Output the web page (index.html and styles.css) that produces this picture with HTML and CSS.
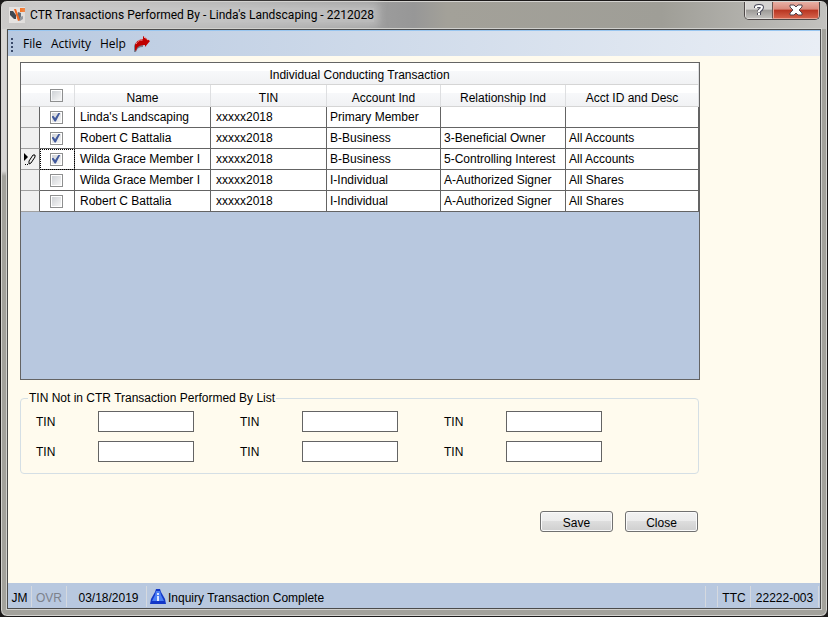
FILE: index.html
```html
<!DOCTYPE html>
<html lang="en">
<head>
<meta charset="utf-8">
<title>CTR Transactions Performed By</title>
<link rel="stylesheet" href="styles.css">
</head>
<body>
<div class="window">
  <header class="titlebar">
    <svg class="app-icon" width="16" height="16" viewBox="0 0 16 16" aria-hidden="true">
      <rect width="16" height="16" fill="#e6e3e1"/>
      <path d="M1 4h3l3 4v4H5L1 8z" fill="#3f4852"/>
      <path d="M9 5l3 1v6l-2 2-2-4z" fill="#5c646e"/>
      <path d="M11 10l3-1v3l-3 2z" fill="#8b9098"/>
      <path d="M5 2h2l4 11-2 1z" fill="#f0641e"/>
      <rect x="11" y="1" width="5" height="4" fill="#f9701c"/>
    </svg>
    <h1 class="title"><span class="title-text">CTR Transactions Performed By - Linda's Landscaping - 2212028</span></h1>
    <div class="caption-buttons">
      <button class="caption help" type="button" aria-label="Help">
        <svg width="12" height="14" viewBox="0 0 12 14"><path d="M3 5V4q0-1 3-1t3 1q0 2-2 3l-1 2M6 10v2" fill="none" stroke="#4a4a5a" stroke-width="4"/><path d="M3 5V4q0-1 3-1t3 1q0 2-2 3l-1 1v1M6 10v2" fill="none" stroke="#fff" stroke-width="2"/></svg>
      </button>
      <button class="caption close" type="button" aria-label="Close window">
        <svg width="14" height="12" viewBox="0 0 14 12"><path d="M1 1h4l2 2 2-2h4v2l-3 3 3 3v2H9L7 9l-2 2H1V9l3-3-3-3z" fill="#fff" stroke="#54444c"/></svg>
      </button>
    </div>
  </header>
  <div class="client">
    <nav class="menubar">
      <span class="grip"></span>
      <button class="menu" type="button">File</button>
      <button class="menu" type="button">Activity</button>
      <button class="menu" type="button">Help</button>
      <button class="menu-arrow" type="button" aria-label="Go">
        <svg width="17" height="16" viewBox="0 0 17 16"><path d="M0 16V10q1-5 9-5v6q-6 0-7 5z" fill="#77808e"/><path d="M1 14V9q1-5 8-6V0l7 5-5 6V9q-6 0-8 3l-1 3z" fill="#c00000"/><path d="M2 8q2-4 7-4M10 1l4 3" fill="none" stroke="#f3b6b6" stroke-dasharray="2 1"/></svg>
      </button>
    </nav>
    <main class="content">
      <div class="grid">
        <table>
          <colgroup><col class="c-row"><col class="c-check"><col class="c-name"><col class="c-tin"><col class="c-acct"><col class="c-rel"><col class="c-desc"></colgroup>
          <thead>
            <tr class="band"><th colspan="7">Individual Conducting Transaction</th></tr>
            <tr class="heads"><th></th><th class="tick"><input type="checkbox" aria-label="Select all"></th><th>Name</th><th>TIN</th><th>Account Ind</th><th>Relationship Ind</th><th>Acct ID and Desc</th></tr>
          </thead>
          <tbody>
            <tr><td class="selector"></td><td class="tick"><input type="checkbox" aria-label="Row 1" checked></td><td class="name">Linda's Landscaping</td><td class="tin">xxxxx2018</td><td>Primary Member</td><td></td><td></td></tr>
            <tr><td class="selector"></td><td class="tick"><input type="checkbox" aria-label="Row 2" checked></td><td class="name">Robert C Battalia</td><td class="tin">xxxxx2018</td><td>B-Business</td><td>3-Beneficial Owner</td><td>All Accounts</td></tr>
            <tr><td class="selector"><svg width="13" height="13" viewBox="0 0 13 13"><path d="M1 0l4 4-4 4z"/><path d="M2 11h1v1H2zM4 11h1v1H4z"/><path d="M6 11V8l4-6h2v2l-4 6z" fill="none" stroke="#000"/></svg></td><td class="tick current"><input type="checkbox" aria-label="Row 3" checked></td><td class="name">Wilda Grace Member I</td><td class="tin">xxxxx2018</td><td>B-Business</td><td>5-Controlling Interest</td><td>All Accounts</td></tr>
            <tr><td class="selector"></td><td class="tick"><input type="checkbox" aria-label="Row 4"></td><td class="name">Wilda Grace Member I</td><td class="tin">xxxxx2018</td><td>I-Individual</td><td>A-Authorized Signer</td><td>All Shares</td></tr>
            <tr><td class="selector"></td><td class="tick"><input type="checkbox" aria-label="Row 5"></td><td class="name">Robert C Battalia</td><td class="tin">xxxxx2018</td><td>I-Individual</td><td>A-Authorized Signer</td><td>All Shares</td></tr>
          </tbody>
        </table>
      </div>
      <fieldset class="tins">
        <legend>TIN Not in CTR Transaction Performed By List</legend>
        <div class="tin-grid">
          <label for="t1">TIN</label><input id="t1" type="text">
          <label for="t2">TIN</label><input id="t2" type="text">
          <label for="t3">TIN</label><input id="t3" type="text">
          <label for="t4">TIN</label><input id="t4" type="text">
          <label for="t5">TIN</label><input id="t5" type="text">
          <label for="t6">TIN</label><input id="t6" type="text">
        </div>
      </fieldset>
      <div class="actions">
        <button class="btn" type="button">Save</button>
        <button class="btn" type="button">Close</button>
      </div>
    </main>
    <footer class="status">
      <span class="cell user">JM</span>
      <span class="cell mode">OVR</span>
      <span class="cell date">03/18/2019</span>
      <span class="cell message"><svg width="16" height="16" viewBox="0 0 16 16"><path d="M6 0h4l1 3 4 7 1 5H0l1-5 4-7z" fill="#1237c8"/><path d="M6 2h4l1 4 3 6H2l3-6z" fill="#4d80f4"/><path d="M7 4h2v2H7zM7 7h2v5H7z" fill="#dbe6ff"/></svg>Inquiry Transaction Complete</span>
      <span class="cell spare"></span>
      <span class="cell site">TTC</span>
      <span class="cell number">22222-003</span>
    </footer>
  </div>
</div>
</body>
</html>
```
FILE: styles.css
```css
* { box-sizing: border-box; }

body {
  margin: 0;
  background: #1c1a1a;
  color: #000;
  font: 12px/16px "Liberation Sans", Arial, sans-serif;
}

button, input { font: inherit; color: inherit; }

.window {
  display: flex;
  flex-direction: column;
  min-height: 100vh;
  padding: 0 6px 7px;
  border: 1px solid #1c1a1a;
  border-radius: 7px;
  background: linear-gradient(#d8d6d4 0, #d8d6d4 170px, #a3a29c 175px) left / 7px 100% no-repeat, #a3a29c;
  box-shadow: inset 0 0 0 1px #d4d3d0;
}

.titlebar {
  display: flex;
  align-items: flex-start;
  height: 27px;
  margin: 1px -5px 0;
  padding-left: 6px;
  border-radius: 5px 5px 0 0;
  background: linear-gradient(90deg, #cccac9 0, #b0b0b0 30%, #979797 50%, #a3a199 54%, #9f9e97 80%, #c3c2bf);
}

.app-icon { margin: 5px 5px 0 1px; }

.title {
  flex: 1;
  margin: 5px 0 0;
  font: 12px/16px Roboto, "Segoe UI", sans-serif;
}

.title-text {
  background: rgba(205, 205, 205, 0.6);
  box-shadow: 0 0 8px 5px rgba(205, 205, 205, 0.6);
}

.caption-buttons {
  display: flex;
  margin: 0 6px 0 0;
  border: 1px solid #4e4848;
  border-top: 0;
  border-radius: 0 0 5px 5px;
  overflow: hidden;
}

.caption {
  display: flex;
  align-items: center;
  justify-content: center;
  height: 17px;
  padding: 0;
  border: 1px solid #e2dfdc;
  border-top: 0;
}

.help { width: 28px; background: linear-gradient(#d4d2d0 0 45%, #9c9a97 50%, #c0bfbc); border-right-color: #6a5550; }
.close { width: 46px; border-color: #e8a090; background: linear-gradient(#e8b0a4, #d98a7c 45%, #b83420 50%, #d4614a); }

.client {
  display: flex;
  flex: 1;
  flex-direction: column;
  border: 1px solid #4c4c4c;
  background: #fffbee;
  box-shadow: 0 0 0 1px #d0d0cd;
}

.menubar {
  display: flex;
  align-items: center;
  height: 26px;
  border-top: 1px solid #99c6f0;
  background: linear-gradient(90deg, #b8c9e0, #e9eef5);
  font: 12px/16px "Open Sans", "Segoe UI", sans-serif;
}

.grip {
  width: 2px;
  height: 14px;
  margin: 2px 5px 0 3px;
  background: repeating-linear-gradient(#3a4a6a 0 2px, transparent 2px 4px);
}

.menu { margin: 0; padding: 0 4px 0 5px; border: 0; background: none; }
.menu-arrow { display: flex; padding: 0 4px; border: 0; background: none; }

.content { flex: 1; padding: 6px 12px 0; }

.grid {
  width: 680px;
  max-width: 100%;
  min-height: 318px;
  border: 1px solid #646464;
  background: #b8c8df;
}

table { width: 100%; border-collapse: separate; border-spacing: 0; table-layout: fixed; }

.c-row { width: 19px; }
.c-check { width: 35px; }
.c-name { width: 136px; }
.c-tin { width: 116px; }
.c-acct { width: 114px; }
.c-rel { width: 125px; }

th, td { height: 21px; padding: 0 3px; overflow: hidden; white-space: nowrap; font-weight: normal; }
th { height: 22px; border-right: 1px solid #dedfe1; border-bottom: 1px solid #d5d5d5; background: linear-gradient(#fff 0 40%, #f7f8fa 40%, #f1f2f4); }
.band th { padding-top: 3px; }
.heads th { padding-top: 4px; }
.heads th:first-child { border-right-color: transparent; }
td { border-right: 1px solid #646464; border-bottom: 1px solid #646464; background: #fff; }
td.name { padding-left: 5px; }
td.tin { padding-left: 5px; }
td.selector { padding: 0 0 0 2px; background: #f0f0f0; border-bottom-color: #a0a0a0; }
.selector svg { display: block; }
td.tick, .heads th.tick { padding: 0 2px 0 0; text-align: center; }
td.current { outline: 1px dotted #000; outline-offset: -1px; }

input[type="checkbox"] {
  display: block;
  width: 13px;
  height: 13px;
  margin: 0 auto;
  border: 1px solid #8e8f8f;
  background: linear-gradient(135deg, #cfd2d6, #f6f6f6) content-box;
  background-color: #f4f4f4;
  padding: 1px;
  appearance: none;
}

input[type="checkbox"]:checked::before {
  content: "";
  display: block;
  width: 9px;
  height: 9px;
  background: #41599c;
  clip-path: polygon(0 45%, 20% 35%, 40% 60%, 80% 0, 100% 0, 48% 100%, 35% 100%);
}

.tins {
  width: 679px;
  max-width: 100%;
  margin: 10px 0 0;
  padding: 5px 15px 11px;
  border: 1px solid #d5dfe5;
  border-radius: 4px;
}

legend { margin-left: -8px; padding: 0 1px; }

.tin-grid {
  display: grid;
  grid-template-columns: repeat(3, 62px 142px);
  row-gap: 9px;
  align-items: center;
}

.tin-grid input { width: 96px; height: 21px; padding: 0 3px; border: 1px solid #646464; background: #fff; }

.actions { display: flex; justify-content: flex-end; gap: 12px; width: 678px; max-width: 100%; margin-top: 37px; }

.btn {
  width: 73px;
  height: 21px;
  padding: 2px 0 0;
  border: 1px solid #707070;
  border-radius: 3px;
  background: linear-gradient(#f2f2f2, #ebebeb 50%, #dddddd 50%, #cfcfcf);
  box-shadow: inset 0 0 0 1px #fafafa;
  line-height: 16px;
}

.status { display: flex; height: 25px; padding: 3px 1px 1px 0; background: #b8c8df; }
.cell { display: flex; align-items: center; justify-content: center; border-right: 1px solid #d5d9df; padding-top: 2px; }
.user { width: 24px; }
.mode { width: 35px; color: #7d828c; }
.date { width: 80px; padding-left: 4px; }
.message { flex: 1; justify-content: flex-start; gap: 2px; padding-left: 3px; }
.message svg { margin-bottom: 2px; }
.spare { width: 12px; }
.site { width: 33px; }
.number { width: 68px; }
```
